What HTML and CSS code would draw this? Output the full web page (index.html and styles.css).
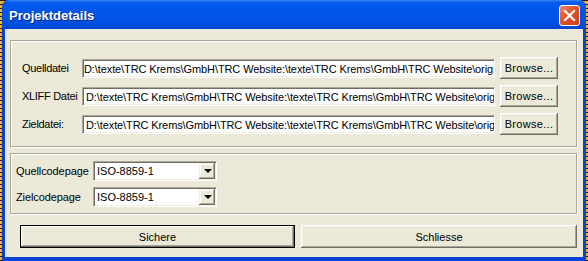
FILE: index.html
```html
<!DOCTYPE html>
<html lang="de">
<head>
    <meta charset="UTF-8">
    <title>Projektdetails</title>
    <link rel="stylesheet" href="styles.css">
</head>
<body>
    <div class="window">
        <div class="titlebar">
            <span class="title">Projektdetails</span>
            <button class="close-btn" aria-label="Schliessen">
                <svg width="13" height="13" viewBox="0 0 13 13">
                    <path d="M2 2 L11 11 M11 2 L2 11" stroke="#fff" stroke-width="2.2" stroke-linecap="square"/>
                </svg>
            </button>
        </div>

        <div class="content">
            <div class="group files">
                <div class="row">
                    <label class="label">Quelldatei</label>
                    <div class="textbox"><span class="scrolled">D:\texte\TRC Krems\GmbH\TRC Website:\texte\TRC Krems\GmbH\TRC Website\orig</span></div>
                    <button class="btn browse">Browse...</button>
                </div>
                <div class="row">
                    <label class="label">XLIFF Datei</label>
                    <div class="textbox"><span>D:\texte\TRC Krems\GmbH\TRC Website:\texte\TRC Krems\GmbH\TRC Website\orig</span></div>
                    <button class="btn browse">Browse...</button>
                </div>
                <div class="row">
                    <label class="label">Zieldatei:</label>
                    <div class="textbox"><span>D:\texte\TRC Krems\GmbH\TRC Website:\texte\TRC Krems\GmbH\TRC Website\orig</span></div>
                    <button class="btn browse">Browse...</button>
                </div>
            </div>

            <div class="group codepages">
                <div class="row">
                    <label class="label cp-label">Quellcodepage</label>
                    <div class="combo">
                        <span class="combo-text">ISO-8859-1</span>
                        <span class="combo-arrow"><span class="tri"></span></span>
                    </div>
                </div>
                <div class="row">
                    <label class="label cp-label">Zielcodepage</label>
                    <div class="combo">
                        <span class="combo-text">ISO-8859-1</span>
                        <span class="combo-arrow"><span class="tri"></span></span>
                    </div>
                </div>
            </div>

            <div class="actions">
                <button class="btn default">Sichere</button>
                <button class="btn">Schliesse</button>
            </div>
        </div>
    </div>
</body>
</html>
```

FILE: styles.css
```css
html, body {
    margin: 0;
    padding: 0;
}

body {
    width: 588px;
    height: 261px;
    overflow: hidden;
    font-family: 'Liberation Sans', Arial, sans-serif;
    font-size: 11px;
    color: #000;
    background: repeating-linear-gradient(to bottom, #1a1a1a 0 1px, #f4b426 1px 4px);
}

.window {
    margin-left: 2px;
    width: 584px;
    height: 261px;
    background-color: #0841d8;
    border-radius: 7px 7px 0 0;
    display: flex;
    flex-direction: column;
    box-sizing: border-box;
    padding: 0 3px 4px 3px;
}

.titlebar {
    height: 29px;
    margin: 0 -3px;
    padding: 0 6px 0 7px;
    border-radius: 7px 7px 0 0;
    background: linear-gradient(to bottom, #3c8cf8 0, #0a5ef0 2px, #0058ee 5px, #0055e8 14px, #0050e0 24px, #0044d0 29px);
    display: flex;
    align-items: center;
    justify-content: space-between;
}

.title {
    color: #fff;
    font-weight: bold;
    font-size: 13px;
    text-shadow: 1px 1px 0 #0a2a8a;
    padding-top: 1px;
}

.close-btn {
    width: 21px;
    height: 21px;
    padding: 0;
    border: 1px solid #fff;
    border-radius: 3px;
    background: linear-gradient(135deg, #f08a6a 0, #e0582e 40%, #c83c14 100%);
    display: flex;
    align-items: center;
    justify-content: center;
    margin-top: 1px;
}

.content {
    flex: 1;
    background-color: #ece9d8;
    padding: 11px 6px 0 5px;
}

.group {
    border: 1px solid #aca899;
    box-shadow: inset 1px 1px 0 #fff, 1px 1px 0 #fff;
    display: flex;
    flex-direction: column;
}

.files {
    padding: 16px 0 11px 11px;
    gap: 6px;
}

.codepages {
    margin-top: 6px;
    padding: 7px 0 6px 5px;
    gap: 6px;
}

.row {
    display: flex;
    align-items: center;
    height: 22px;
}

.codepages .row {
    height: 20px;
}

.label {
    width: 60px;
    flex: none;
    white-space: nowrap;
    letter-spacing: -0.3px;
}

.cp-label {
    width: 77px;
    letter-spacing: -0.1px;
}

.textbox {
    width: 413px;
    height: 19px;
    flex: none;
    box-sizing: border-box;
    background: #fff;
    border-top: 1px solid #aca899;
    border-left: 1px solid #aca899;
    border-right: 1px solid #fff;
    border-bottom: 1px solid #fff;
    box-shadow: inset 1px 1px 0 #716f64, inset -1px -1px 0 #f1efe2;
    overflow: hidden;
    white-space: nowrap;
    padding: 2px 0 0 3px;
    letter-spacing: -0.1px;
    line-height: 14px;
}

.scrolled {
    margin-left: -2px;
}

.btn {
    font-family: 'Liberation Sans', Arial, sans-serif;
    font-size: 11px;
    color: #000;
    background-color: #ece9d8;
    border: none;
    padding: 0;
    box-shadow: inset -1px -1px 0 #716f64, inset 1px 1px 0 #fff, inset -2px -2px 0 #aca899, inset 2px 2px 0 #f1efe2;
}

.browse {
    width: 58px;
    height: 22px;
    margin-left: 5px;
    letter-spacing: 0.3px;
}

.combo {
    width: 124px;
    height: 20px;
    box-sizing: border-box;
    background: #fff;
    border-top: 1px solid #aca899;
    border-left: 1px solid #aca899;
    border-right: 1px solid #fff;
    border-bottom: 1px solid #fff;
    box-shadow: inset 1px 1px 0 #716f64, inset -1px -1px 0 #f1efe2;
    display: flex;
    align-items: stretch;
    padding: 1px;
}

.combo-text {
    flex: 1;
    padding-left: 2px;
    line-height: 16px;
}

.combo-arrow {
    width: 16px;
    background-color: #ece9d8;
    box-shadow: inset -1px -1px 0 #716f64, inset 1px 1px 0 #f1efe2, inset -2px -2px 0 #aca899, inset 2px 2px 0 #fff;
    display: flex;
    align-items: center;
    justify-content: center;
}

.tri {
    width: 0;
    height: 0;
    border-left: 4px solid transparent;
    border-right: 4px solid transparent;
    border-top: 4px solid #000;
    margin-left: 1px;
}

.actions {
    display: flex;
    gap: 6px;
    margin-top: 11px;
    padding-left: 10px;
}

.actions .btn {
    height: 23px;
    width: 276px;
}

.actions .default {
    width: 275px;
    border: 1px solid #000;
    box-shadow: inset -1px -1px 0 #716f64, inset 1px 1px 0 #fff, inset -2px -2px 0 #aca899, inset 2px 2px 0 #f1efe2;
}
```
